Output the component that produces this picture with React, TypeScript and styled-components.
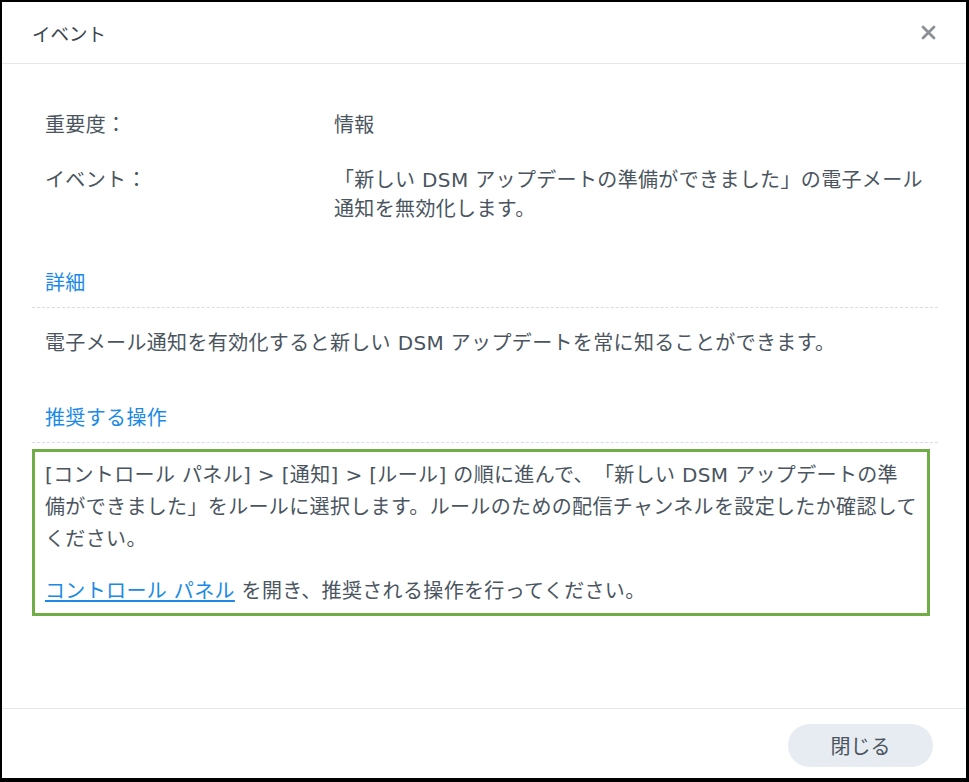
import React from "react";
import styled, { createGlobalStyle } from "styled-components";

const GlobalStyle = createGlobalStyle`
  html, body {
    margin: 0;
    padding: 0;
    background: #ffffff;
  }
  body {
    font-family: "DejaVu Sans", "Noto Sans CJK JP", sans-serif;
    color: #4a5560;
    text-spacing-trim: space-all;
  }
`;

const Dialog = styled.div`
  box-sizing: border-box;
  width: 969px;
  height: 782px;
  display: flex;
  flex-direction: column;
  background: #ffffff;
  border-style: solid;
  border-color: #000000;
  border-width: 2px 3px 4px 2px;
`;

const Header = styled.div`
  height: 61px;
  flex-shrink: 0;
  display: flex;
  align-items: center;
  justify-content: space-between;
  padding: 0 30px 0 30px;
  border-bottom: 1px solid #e3e8ee;
`;

const Title = styled.div`
  font-size: 18.5px;
  color: #3b444d;
`;

const CloseButton = styled.button`
  border: none;
  background: transparent;
  padding: 0;
  width: 16px;
  height: 16px;
  display: flex;
  align-items: center;
  justify-content: center;
  cursor: pointer;
`;

const Body = styled.div`
  flex: 1;
  padding: 47px 28px 0 30px;
  font-size: 20px;
  letter-spacing: 0.35px;
  line-height: 29px;
`;

const InfoList = styled.div`
  display: flex;
  flex-direction: column;
  gap: 26px;
  padding-left: 13px;
`;

const InfoRow = styled.div`
  display: grid;
  grid-template-columns: 289px 1fr;
`;

const Label = styled.div`
  color: #4a5560;
`;

const Value = styled.div`
  color: #4a5560;
`;

const SectionTitle = styled.div<{ $top: number }>`
  margin-top: ${(p) => p.$top}px;
  padding: 0 0 9px 13px;
  color: #1a8ae6;
  border-bottom: 1px dashed #d5dde6;
`;

const Paragraph = styled.p`
  margin: 21px 0 0 0;
  padding-left: 13px;
`;

const Highlight = styled.div`
  margin: 6px 8px 0 0;
  border: 3px solid #70ad47;
  padding: 7px 6px 6px 10px;
  line-height: 32px;
`;

const HighlightText = styled.p<{ $gap?: number }>`
  margin: ${(p) => p.$gap ?? 0}px 0 0 0;
`;

const Link = styled.a`
  color: #1a8ae6;
  text-decoration: underline;
  text-underline-offset: 2px;
  cursor: pointer;
`;

const Footer = styled.div`
  flex-shrink: 0;
  display: flex;
  justify-content: flex-end;
  padding: 15px 33px 11px 0;
  border-top: 1px solid #e3e8ee;
`;

const PillButton = styled.button`
  width: 145px;
  height: 43px;
  border: none;
  border-radius: 22px;
  background: #e7ecf2;
  color: #4a5560;
  font-family: "Noto Sans CJK JP", sans-serif;
  font-size: 20px;
  cursor: pointer;
`;

const CloseIcon = () => (
  <svg width="15" height="15" viewBox="0 0 15 15">
    <path
      d="M2 2 L13 13 M13 2 L2 13"
      stroke="#8a9096"
      strokeWidth="2.8"
      strokeLinecap="round"
    />
  </svg>
);

const App = () => {
  return (
    <Dialog>
      <GlobalStyle />
      <Header>
        <Title>イベント</Title>
        <CloseButton aria-label="close">
          <CloseIcon />
        </CloseButton>
      </Header>
      <Body>
        <InfoList>
          <InfoRow>
            <Label>重要度：</Label>
            <Value>情報</Value>
          </InfoRow>
          <InfoRow>
            <Label>イベント：</Label>
            <Value>
              「新しい DSM アップデートの準備ができました」の電子メール
              <br />
              通知を無効化します。
            </Value>
          </InfoRow>
        </InfoList>

        <SectionTitle $top={45}>詳細</SectionTitle>
        <Paragraph>
          電子メール通知を有効化すると新しい DSM アップデートを常に知ることができます。
        </Paragraph>

        <SectionTitle $top={46}>推奨する操作</SectionTitle>
        <Highlight>
          <HighlightText>
            [コントロール パネル] &gt; [通知] &gt; [ルール] の順に進んで、「新しい DSM アップデートの準
            <br />
            備ができました」をルールに選択します。ルールのための配信チャンネルを設定したか確認して
            <br />
            ください。
          </HighlightText>
          <HighlightText $gap={20}>
            <Link>コントロール パネル</Link> を開き、推奨される操作を行ってください。
          </HighlightText>
        </Highlight>
      </Body>
      <Footer>
        <PillButton>閉じる</PillButton>
      </Footer>
    </Dialog>
  );
};

export default App;
